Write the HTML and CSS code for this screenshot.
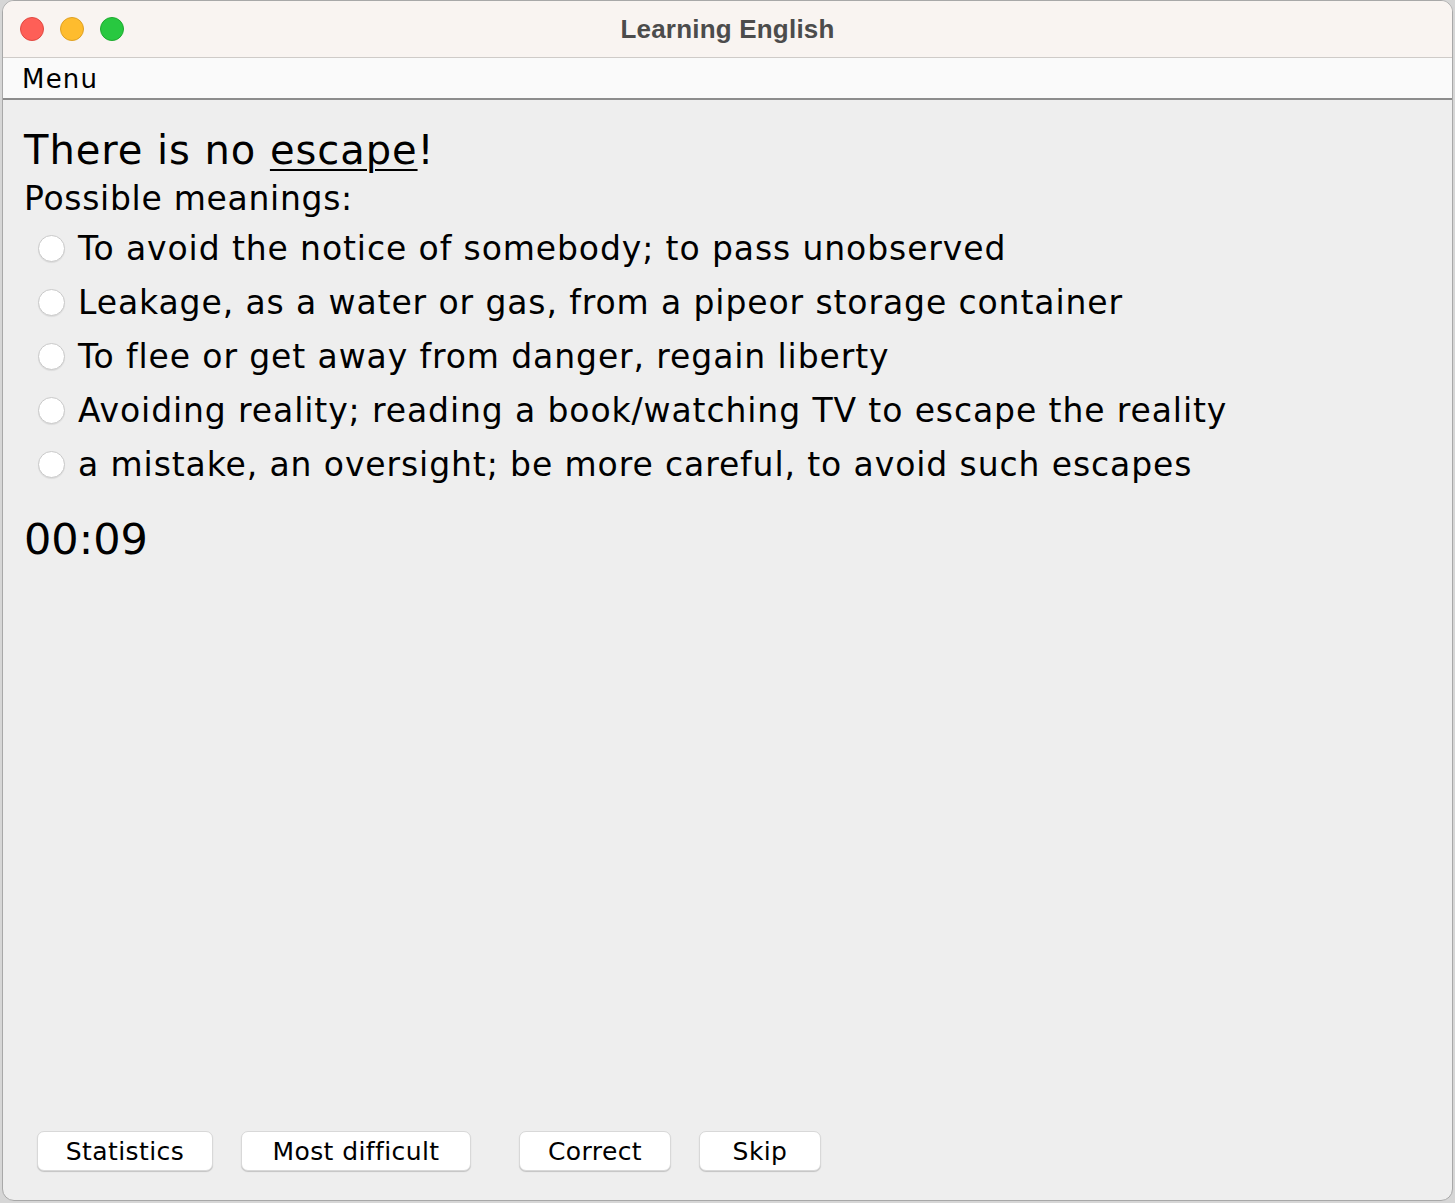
FILE: index.html
```html
<!DOCTYPE html>
<html>
<head>
<meta charset="utf-8">
<title>Learning English</title>
<link rel="stylesheet" href="styles.css">
</head>
<body>
<div class="window">
  <div class="titlebar">
    <div class="lights">
      <span class="light red"></span>
      <span class="light yellow"></span>
      <span class="light green"></span>
    </div>
    <div class="title">Learning English</div>
  </div>
  <div class="menubar"><span class="menu">Menu</span></div>
  <div class="content">
    <div class="main">
      <div class="sentence">There is no <u>escape</u>!</div>
      <div class="label">Possible meanings:</div>
      <div class="options">
        <label class="option"><span class="radio"></span><span>To avoid the notice of somebody; to pass unobserved</span></label>
        <label class="option"><span class="radio"></span><span>Leakage, as a water or gas, from a pipeor storage container</span></label>
        <label class="option"><span class="radio"></span><span>To flee or get away from danger, regain liberty</span></label>
        <label class="option"><span class="radio"></span><span>Avoiding reality; reading a book/watching TV to escape the reality</span></label>
        <label class="option"><span class="radio"></span><span>a mistake, an oversight; be more careful, to avoid such escapes</span></label>
      </div>
      <div class="timer">00:09</div>
    </div>
    <div class="buttons">
      <button class="btn b-stats">Statistics</button>
      <button class="btn b-diff">Most difficult</button>
      <button class="btn b-correct">Correct</button>
      <button class="btn b-skip">Skip</button>
    </div>
  </div>
</div>
</body>
</html>
```

FILE: styles.css
```css
html, body {
  margin: 0;
  padding: 0;
  background: #d6d6d6;
  width: 1455px;
  height: 1203px;
  overflow: hidden;
  font-family: "DejaVu Sans", sans-serif;
}
.window {
  box-sizing: border-box;
  margin-left: 2px;
  width: 1451px;
  height: 1201px;
  border: 1px solid #a8a8a8;
  border-radius: 12px;
  overflow: hidden;
  display: flex;
  flex-direction: column;
  background: #eeeeee;
}
.titlebar {
  height: 56px;
  background: #f9f4f1;
  border-bottom: 1px solid #cfcbc8;
  display: flex;
  align-items: center;
  position: relative;
}
.lights {
  display: flex;
  gap: 16px;
  padding-left: 17px;
}
.light {
  width: 24px;
  height: 24px;
  border-radius: 50%;
  box-sizing: border-box;
}
.red { background: #fe5f57; border: 1px solid #e14942; }
.yellow { background: #febc2e; border: 1px solid #dfa023; }
.green { background: #28c840; border: 1px solid #1eaa2f; }
.title {
  position: absolute;
  left: 0;
  right: 0;
  text-align: center;
  font-family: "Liberation Sans", sans-serif;
  font-weight: bold;
  font-size: 26px;
  color: #4c4c4c;
  letter-spacing: 0.2px;
}
.menubar {
  height: 40px;
  background: #fafafa;
  border-bottom: 2px solid #8c8c8c;
  display: flex;
  align-items: center;
  padding-left: 19px;
}
.menu {
  font-size: 26px;
  letter-spacing: 1.2px;
  color: #000;
  padding-top: 2px;
}
.content {
  flex: 1;
  display: flex;
  flex-direction: column;
  justify-content: space-between;
  padding: 23px 0 29px 21px;
}
.main {
  display: flex;
  flex-direction: column;
}
.sentence {
  font-size: 40px;
  line-height: 54px;
  letter-spacing: 0.95px;
  color: #000;
}
.sentence u {
  text-decoration-thickness: 2px;
  text-underline-offset: 5px;
}
.label {
  font-size: 33px;
  line-height: 40px;
  letter-spacing: 0.7px;
  margin-top: 2px;
  color: #000;
}
.options {
  display: flex;
  flex-direction: column;
  padding-top: 2px;
}
.option {
  display: flex;
  align-items: center;
  gap: 13px;
  height: 54px;
  font-size: 33px;
  letter-spacing: 0.9px;
  color: #000;
  padding-left: 14px;
}
.radio {
  width: 27px;
  height: 27px;
  border-radius: 50%;
  box-sizing: border-box;
  background: #ffffff;
  border: 1px solid #c9c9c9;
  box-shadow: 0 1px 1px rgba(0,0,0,0.08);
  flex: none;
}
.timer {
  font-size: 43px;
  line-height: 60px;
  margin-top: 18px;
  color: #000;
}
.buttons {
  display: flex;
  gap: 28px;
  padding-left: 13px;
}
.btn {
  font-family: "DejaVu Sans", sans-serif;
  font-size: 25px;
  letter-spacing: 0.4px;
  height: 40px;
  background: #ffffff;
  border: 1px solid #d8d8d8;
  border-radius: 7px;
  box-shadow: 0 1px 1px rgba(0,0,0,0.18);
  color: #000;
  padding: 0;
}
.b-stats { width: 176px; }
.b-diff { width: 230px; }
.b-correct { width: 152px; margin-left: 20px; }
.b-skip { width: 122px; }
```
